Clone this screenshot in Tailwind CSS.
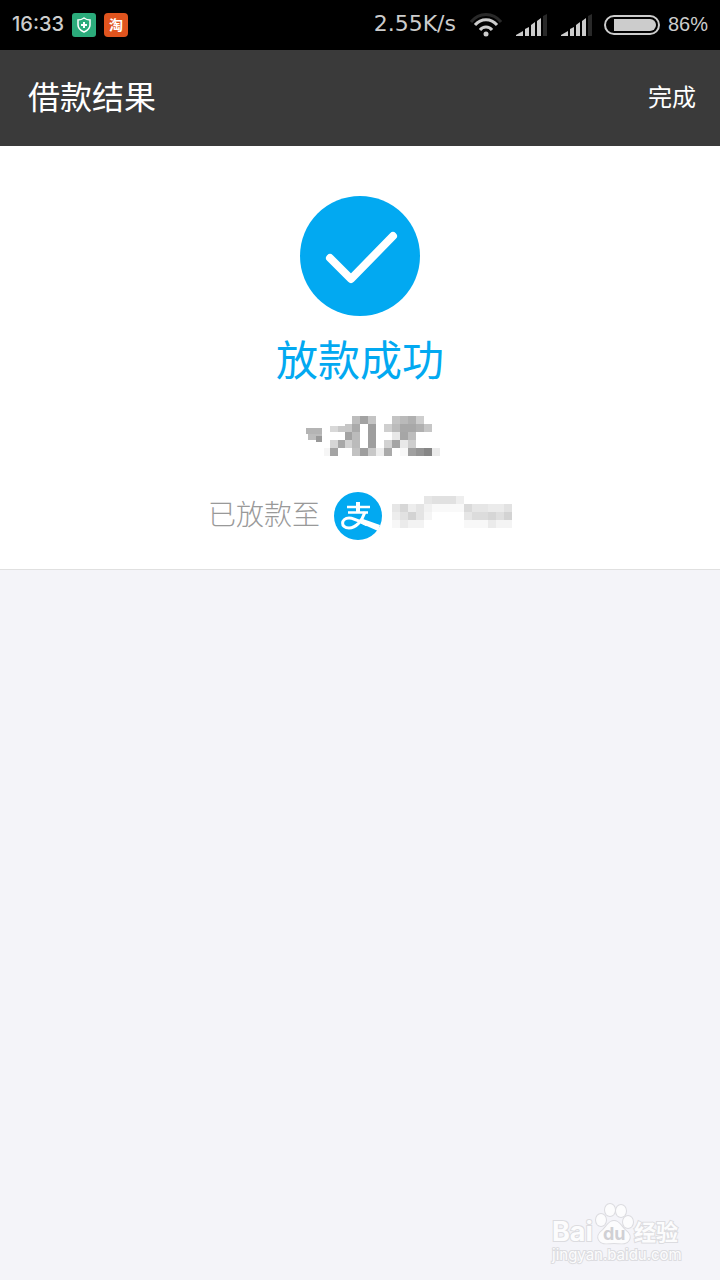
<!DOCTYPE html>
<html lang="zh-CN">
<head>
  <meta charset="UTF-8" />
  <meta name="viewport" content="width=device-width, initial-scale=1.0"/>
  <title>借款结果</title>
  <script src="https://cdn.jsdelivr.net/npm/@tailwindcss/browser@4"></script>
</head>
<body class="min-h-screen flex flex-col bg-[#f4f4f9] font-['Liberation_Sans','Noto_Sans_CJK_SC',sans-serif]">
  <!-- Status bar -->
  <div class="h-[50px] bg-black text-[#cccccc] flex items-center justify-between px-3 pb-0.5 text-xl">
    <div class="flex items-center gap-2">
      <span class="font-medium font-['Inter','Liberation_Sans',sans-serif]">16:33</span>
      <svg class="w-6 h-6 mt-0.5" viewBox="0 0 24 24">
        <rect x="0" y="0" width="24" height="24" rx="3" fill="#2bab7b"/>
        <path d="M12 5c2 1.500 4 2 6 2v5c0 3-2.500 5.500-6 7-3.500-1.500-6-4-6-7V7c2 0 4-.5 6-2z" fill="none" stroke="#fff" stroke-width="1.500"/>
        <path d="M12 9v6M9 12h6" stroke="#fff" stroke-width="2"/>
      </svg>
      <span class="w-6 h-6 mt-0.5 rounded bg-[#e0541e] text-white text-sm font-bold flex items-center justify-center">淘</span>
    </div>
    <div class="flex items-center">
      <span class="mr-[14px] text-[22px] font-['DejaVu_Sans',sans-serif]">2.55K/s</span>
      <svg class="w-8 h-6 mr-[14px] mt-0.5" viewBox="0 0 32 24" fill="none" stroke="#cccccc" stroke-width="3">
        <path d="M1 9C9 -1 23 -1 31 9" stroke="#292929"/>
        <path d="M5 12C11 5 21 5 27 12"/>
        <path d="M10 17C13 13 19 13 22 17"/>
        <circle cx="16" cy="21" r="2.500" fill="#cccccc" stroke="none"/>
      </svg>
      <svg class="w-8 h-[22px] mr-[13px] mt-0.5" viewBox="0 0 32 22" fill="#cccccc">
        <path d="M0 22v-1l7-4v5zM9 22v-7l4-2v9zM15 22V11l4-3v14zM21 22V7l4-3v18z"/>
        <path d="M27 22V2l4-2v22z" fill="#292929"/>
      </svg>
      <svg class="w-8 h-[22px] mr-[11px] mt-0.5" viewBox="0 0 32 22" fill="#cccccc">
        <path d="M0 22v-1l7-4v5zM9 22v-7l4-2v9zM15 22V11l4-3v14zM21 22V7l4-3v18z"/>
        <path d="M27 22V2l4-2v22z" fill="#292929"/>
      </svg>
      <svg class="w-14 h-5 mr-2 mt-0.5" viewBox="0 0 56 20">
        <rect x="1" y="1" width="54" height="18" rx="9" fill="none" stroke="#cccccc" stroke-width="2"/>
        <path d="M10 4h36a6 6 0 0 1 0 12H10z" fill="#cccccc"/>
      </svg>
      <span>86%</span>
    </div>
  </div>

  <!-- Header -->
  <header class="h-24 bg-[#3a3a3a] text-white flex items-center justify-between pl-7 pr-6">
    <h1 class="text-[32px]">借款结果</h1>
    <button type="button" class="text-2xl">完成</button>
  </header>

  <!-- Result -->
  <main class="bg-white border-b border-[#e0e0e0] flex flex-col items-center pt-[50px] pb-[29px]">
    <svg class="w-[120px] h-[120px]" viewBox="0 0 120 120">
      <circle cx="60" cy="60" r="60" fill="#02a9f1"/>
      <path d="M30 62L51 83L93 40" fill="none" stroke="#fff" stroke-width="8" stroke-linecap="round" stroke-linejoin="round"/>
    </svg>
    <h2 class="mt-[22px] text-[42px] leading-[48px] text-[#02a9f1]">放款成功</h2>
    <svg id="amount" class="mt-[30px] w-36 h-10 ml-9" viewBox="0 0 144 40" shape-rendering="crispEdges"></svg>
    <div class="mt-9 flex items-center">
      <p class="text-[28px] leading-10 font-light text-[#999999]">已放款至</p>
      <svg class="ml-[14px] w-12 h-12" viewBox="0 0 48 48">
        <circle cx="24" cy="24" r="24" fill="#02a9f1"/>
        <g fill="none" stroke="#fff">
          <path d="M13 15h23M14 20.500h20" stroke-width="2.500"/>
          <path d="M24 10v11" stroke-width="4"/>
          <path d="M31 20C28 29 22 36 15 36C6 36 7 26 15 26C20 26 27 30 33 33" stroke-width="3"/>
        </g>
        <path d="M29 27L46 33L44 39L26 31z" fill="#fff"/>
      </svg>
      <svg id="account" class="ml-[10px] mb-2 w-[120px] h-8" viewBox="0 0 120 32" shape-rendering="crispEdges"></svg>
    </div>
  </main>

  <!-- Watermark -->
  <footer class="mt-auto self-end mr-10 mb-4 w-32">
    <svg class="w-32 h-16 overflow-visible" viewBox="0 0 128 64" fill="#fcfcfd" stroke="#dcdce0" stroke-width="2" paint-order="stroke" font-family="Inter, Noto Sans CJK SC, sans-serif">
      <text x="0" y="41" font-size="27" font-weight="bold">Bai</text>
      <ellipse cx="49" cy="20" rx="5" ry="6"/>
      <ellipse cx="58" cy="10" rx="5" ry="6"/>
      <ellipse cx="69" cy="11" rx="5" ry="6"/>
      <ellipse cx="76" cy="22" rx="5" ry="6"/>
      <path d="M62 21c-5 0-7 5-11 9-4 3-6 6-4 10 3 5 9 3 15 3s12 2 15-3c2-4 0-7-4-10-4-4-6-9-11-9z"/>
      <text x="51" y="40" font-size="18" font-weight="bold" fill="#d0d0d4" stroke="none">du</text>
      <text x="82" y="40" font-size="22" font-weight="bold">经验</text>
      <text x="0" y="60" font-size="15">jingyan.baidu.com</text>
    </svg>
  </footer>

  <script>
    // masked values: x, y, width, height, shade
    const amount = [
      [0, 12, 16, 6, '#b4b4b4'], [2, 18, 14, 6, '#bcbcbc'], [10, 20, 6, 6, '#999'],
      [24, 10, 8, 6, '#d8d8d8'], [32, 10, 8, 6, '#c8c8c8'], [24, 32, 8, 8, '#a4a4a4'], [18, 32, 6, 8, '#f6f6f6'],
      [24, 24, 8, 8, '#d6d6d6'], [32, 24, 8, 8, '#a8a8a8'], [39, 8, 7, 8, '#c6c6c6'], [39, 16, 7, 8, '#a2a2a2'], [39, 24, 7, 8, '#d2d2d2'],
      [46, 0, 8, 8, '#bdbdbd'], [54, 0, 8, 8, '#a2a2a2'], [62, 0, 8, 8, '#c4c4c4'],
      [46, 8, 8, 8, '#aaa'], [46, 16, 8, 16, '#bbb'], [62, 8, 8, 24, '#9e9e9e'],
      [46, 32, 8, 8, '#c2c2c2'], [54, 32, 8, 8, '#9e9e9e'], [62, 32, 8, 8, '#c8c8c8'], [70, 32, 8, 8, '#ededed'], [78, 32, 8, 8, '#aaa'],
      [86, 0, 8, 8, '#c4c4c4'], [94, 0, 8, 8, '#bababa'], [102, 0, 8, 8, '#b0b0b0'], [110, 0, 8, 8, '#cecece'],
      [78, 8, 8, 8, '#cfcfcf'], [86, 8, 8, 8, '#bbb'], [94, 8, 16, 8, '#a8a8a8'], [110, 8, 8, 8, '#b0b0b0'], [118, 8, 8, 8, '#c6c6c6'],
      [86, 16, 8, 8, '#e8e8e8'], [94, 16, 8, 8, '#a6a6a6'], [102, 16, 8, 8, '#bdbdbd'],
      [78, 24, 8, 8, '#d2d2d2'], [86, 24, 8, 8, '#a4a4a4'], [94, 24, 8, 8, '#e8e8e8'], [102, 24, 8, 8, '#cecece'],
      [94, 32, 8, 8, '#f8f8f8'], [102, 32, 8, 8, '#a0a0a0'], [110, 32, 8, 8, '#949494'], [118, 32, 8, 8, '#868686'], [126, 32, 8, 8, '#ebebeb']
    ];
    const account = [
      [0, 8, 8, 8, '#e6e6e6'], [8, 8, 8, 8, '#d7d7d7'], [16, 8, 8, 8, '#ededed'], [24, 8, 8, 8, '#e4e4e4'], [32, 8, 8, 8, '#f1f1f1'],
      [0, 16, 8, 8, '#ededed'], [8, 16, 8, 8, '#e2e2e2'], [16, 16, 8, 8, '#d3d3d3'], [24, 16, 8, 8, '#e4e4e4'], [32, 16, 8, 8, '#f5f5f5'],
      [0, 24, 8, 8, '#f7f7f7'], [8, 24, 8, 8, '#ebebeb'], [16, 24, 16, 8, '#f3f3f3'],
      [32, 0, 8, 8, '#e6e6e6'], [40, 0, 24, 8, '#e1e1e1'], [64, 0, 8, 8, '#eee'], [40, 8, 32, 8, '#f9f9f9'],
      [72, 8, 8, 8, '#dadada'], [80, 8, 16, 8, '#e6e6e6'], [96, 8, 16, 8, '#ebebeb'], [112, 8, 8, 8, '#e2e2e2'],
      [72, 16, 8, 8, '#e6e6e6'], [80, 16, 16, 8, '#dcdcdc'], [96, 16, 8, 8, '#d6d6d6'], [104, 16, 8, 8, '#dfdfdf'], [112, 16, 8, 8, '#d3d3d3'],
      [72, 24, 24, 8, '#f8f8f8'], [96, 24, 8, 8, '#ebebeb'], [104, 24, 16, 8, '#f4f4f4']
    ];

    function renderMask(id, cells) {
      document.getElementById(id).innerHTML = cells.map(([x, y, w, h, fill]) =>
        `<rect x="${x}" y="${y}" width="${w}" height="${h}" fill="${fill}"/>`
      ).join('');
    }

    renderMask('amount', amount);
    renderMask('account', account);
  </script>
</body>
</html>
